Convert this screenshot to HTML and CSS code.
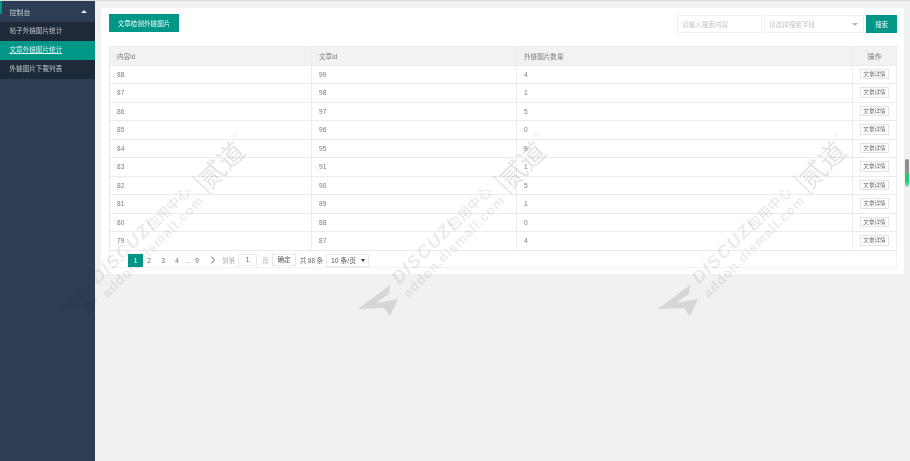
FILE: index.html
```html
<!DOCTYPE html>
<html lang="zh">
<head>
<meta charset="utf-8">
<title>文章外链图片统计</title>
<link rel="stylesheet" href="styles.css">
</head>
<body>
<div class="app">
  <aside class="sidebar">
    <div class="menu-title"><span>控制台</span><i class="caret-up"></i></div>
    <a class="menu-item">帖子外链图片统计</a>
    <a class="menu-item active">文章外链图片统计</a>
    <a class="menu-item">外链图片下载列表</a>
  </aside>
  <main class="content">
    <section class="card">
      <div class="toolbar">
        <button class="btn-primary btn-wide">文章检测外链图片</button>
        <div class="search">
          <div class="field field-input">请输入搜索内容</div>
          <div class="field field-select"><span>请选择搜索字段</span><i class="caret-down"></i></div>
          <button class="btn-primary btn-search">搜索</button>
        </div>
      </div>
      <div class="grid">
        <table class="data">
          <thead>
            <tr><th class="c1">内容id</th><th class="c2">文章id</th><th class="c3">外链图片数量</th><th class="c4">操作</th></tr>
          </thead>
          <tbody>
            <tr><td>88</td><td>99</td><td>4</td><td class="op"><span class="mini">文章详情</span></td></tr>
            <tr><td>87</td><td>98</td><td>1</td><td class="op"><span class="mini">文章详情</span></td></tr>
            <tr><td>86</td><td>97</td><td>5</td><td class="op"><span class="mini">文章详情</span></td></tr>
            <tr><td>85</td><td>96</td><td>0</td><td class="op"><span class="mini">文章详情</span></td></tr>
            <tr><td>84</td><td>95</td><td>9</td><td class="op"><span class="mini">文章详情</span></td></tr>
            <tr><td>83</td><td>91</td><td>1</td><td class="op"><span class="mini">文章详情</span></td></tr>
            <tr><td>82</td><td>90</td><td>5</td><td class="op"><span class="mini">文章详情</span></td></tr>
            <tr><td>81</td><td>89</td><td>1</td><td class="op"><span class="mini">文章详情</span></td></tr>
            <tr><td>80</td><td>88</td><td>0</td><td class="op"><span class="mini">文章详情</span></td></tr>
            <tr><td>79</td><td>87</td><td>4</td><td class="op"><span class="mini">文章详情</span></td></tr>
          </tbody>
        </table>
        <nav class="pager">
          <span class="prev">‹</span>
          <span class="pg current">1</span>
          <span class="pg">2</span>
          <span class="pg">3</span>
          <span class="pg">4</span>
          <span class="dots">…</span>
          <span class="pg">9</span>
          <svg class="next" viewBox="0 0 6 8" width="6" height="8"><path d="M1.2 .6 4.6 4 1.2 7.4" fill="none" stroke="#666" stroke-width="1"/></svg>
          <span class="muted go">到第</span>
          <span class="page-box">1</span>
          <span class="muted unit">页</span>
          <span class="ok">确定</span>
          <span class="total">共 88 条</span>
          <span class="size">10 条/页<i class="caret-small"></i></span>
        </nav>
      </div>
    </section>
  </main>
</div>
<div class="scroll-mark"></div>
<svg class="watermark" width="910" height="461" viewBox="0 0 910 461">
  <defs>
    <g id="wm">
      <path class="wm-fill" d="M0 184 32 160 31 169 18 178 40 174 32 191 26 183Z"/>
      <text class="wm-big" transform="translate(41 160) rotate(-45)">DISCUZ!</text>
      <text class="wm-cn" transform="translate(96 106) rotate(-45)">应用中心</text>
      <path class="wm-line" d="M135 51 154 69"/>
      <text class="wm-dao" transform="translate(153 65) rotate(-45)">贰道</text>
      <text class="wm-r" transform="translate(178 15) rotate(-45)">®</text>
      <text class="wm-small" transform="translate(50.5 173.5) rotate(-45)">addon.dismall.com</text>
    </g>
  </defs>
  <use href="#wm" x="57" y="125"/>
  <use href="#wm" x="358" y="125"/>
  <use href="#wm" x="658" y="125"/>
</svg>
</body>
</html>
```

FILE: styles.css
```css
* { box-sizing: border-box; }
html, body { margin: 0; height: 100%; overflow: hidden; }
body {
  background: #f1f1f1;
  font-family: "Liberation Sans", "Noto Sans CJK SC", sans-serif;
  font-size: 6.6px;
  color: #777;
}
.app { display: flex; height: 461px; border-top: 1px solid #dcdcdc; filter: blur(.3px); }

.sidebar { width: 95px; flex: none; background: #2c3d54; color: #c9ced4; }
.menu-title {
  height: 21px; padding: 0 9px 0 7.5px;
  display: flex; align-items: center; justify-content: space-between;
  border-left: 2px solid #009688; border-image: linear-gradient(#009688 60%, transparent 60%) 1;
  font-size: 7px;
}
.caret-up { width: 0; height: 0; border: 3px solid transparent; border-bottom-color: #e4e7ea; border-top: 0; margin-right: -1px; }
.menu-item { display: block; height: 19px; line-height: 18px; padding-left: 9.5px; background: #1e2a39; color: #c2c6cb; }
.menu-item.active { background: #009688; color: #def3f0; text-decoration: underline; }

.content { flex: 1; padding: 7px 7px 0 6px; }
.card { background: #fff; height: 266px; padding: 6px 7px 0 8px; }
.toolbar { display: flex; justify-content: space-between; height: 32px; }
.btn-primary { background: #009688; color: #f0faf8; border: 0; padding: 0; font: inherit; font-size: 6.6px; }
.btn-wide { width: 70px; height: 18px; }
.search { display: flex; align-items: flex-start; gap: 2px; padding-top: 1px; }
.field { height: 18px; border: 1px solid #f0f0f0; color: #c4c4c4; display: flex; align-items: center; padding-left: 4px; }
.field-input { width: 85px; }
.field-select { width: 100px; justify-content: space-between; padding-right: 5px; }
.caret-down { width: 0; height: 0; border: 3px solid transparent; border-top-color: #b5b5b5; border-bottom: 0; }
.btn-search { width: 31px; height: 18px; }

.grid { height: 222px; box-shadow: inset 1px 0 #f2f2f2, inset -1px 0 #f2f2f2, inset 0 -1px #f2f2f2; }
.data { width: 787px; table-layout: fixed; border-collapse: collapse; }
.data th, .data td { border: 1px solid #ececec; padding: 0 0 0 7px; font-weight: 400; text-align: left; color: #7a7a7a; }
.data th { height: 18.5px; background: #f2f2f2; }
.data td { height: 18.5px; }
.c1 { width: 202px; }
.c2 { width: 205px; }
.c3 { width: 336px; }
.c4 { width: 44px; }
.data th.c4 { padding: 0; text-align: center; font-size: 7px; }
.data td.op { padding: 0 0 1px; text-align: center; }
.mini { display: inline-block; height: 10.5px; line-height: 8.5px; width: 28.5px; border: 1px solid #e4e4e4; background: #fff; color: #707070; font-size: 5.6px; vertical-align: middle; }

.pager { display: flex; align-items: center; height: 13px; margin-top: 3px; padding-left: 7px; color: #6a6a6a; }
.pg { width: 14px; text-align: center; flex: none; }
.prev { width: 12px; flex: none; color: #ccc; font-size: 8px; text-align: center; }
.current { width: 15px; height: 13px; line-height: 13px; margin-right: -1px; background: #009688; color: #fff; }
.dots { width: 6px; flex: none; text-align: center; color: #999; }
.next { flex: none; margin: 0 6px; }
.muted { color: #b0b0b0; }
.go { width: 13px; flex: none; margin-right: 3px; white-space: nowrap; }
.page-box { width: 19px; flex: none; height: 12px; line-height: 10px; border: 1px solid #e9e9e9; text-align: center; margin-right: 5px; }
.unit { width: 7px; flex: none; margin-right: 3px; }
.ok { width: 24px; flex: none; height: 12px; line-height: 10px; border: 1px solid #e9e9e9; text-align: center; margin-right: 4px; color: #555; }
.total { width: 22px; flex: none; margin-right: 4px; color: #6a6a6a; white-space: nowrap; font-size: 6.3px; }
.size { width: 43px; flex: none; height: 13px; line-height: 11.5px; border: 1px solid #e9e9e9; padding-left: 4px; position: relative; font-size: 6.8px; color: #555; }
.caret-small { position: absolute; right: 3px; top: 4px; width: 0; height: 0; border: 2px solid transparent; border-top: 3px solid #333; border-bottom: 0; }

.scroll-mark {
  position: absolute; left: 905px; top: 159px; width: 4px; height: 28px; border-radius: 2px;
  background: linear-gradient(#8f8f8f 0 46%, #1fd06a 54% 80%, #8fe6b3 100%);
}

.watermark { position: absolute; left: 0; top: 0; pointer-events: none; filter: blur(.3px); }
.watermark text { fill: rgba(70, 70, 70, .11); font-family: "Liberation Sans", "Noto Sans CJK SC", sans-serif; }
.watermark .wm-cn, .watermark .wm-dao { fill: rgba(70, 70, 70, .15); }
.wm-fill { fill: rgba(50, 50, 50, .14); }
.wm-big { font-size: 18px; font-style: italic; font-weight: 700; letter-spacing: 1.5px; }
.wm-cn { font-size: 13.5px; }
.wm-dao { font-size: 26px; }
.wm-r { font-size: 9px; }
.wm-small { font-size: 13.5px; font-weight: 700; letter-spacing: .9px; }
.wm-line { stroke: rgba(70, 70, 70, .14); stroke-width: 1.5; fill: none; }
```
